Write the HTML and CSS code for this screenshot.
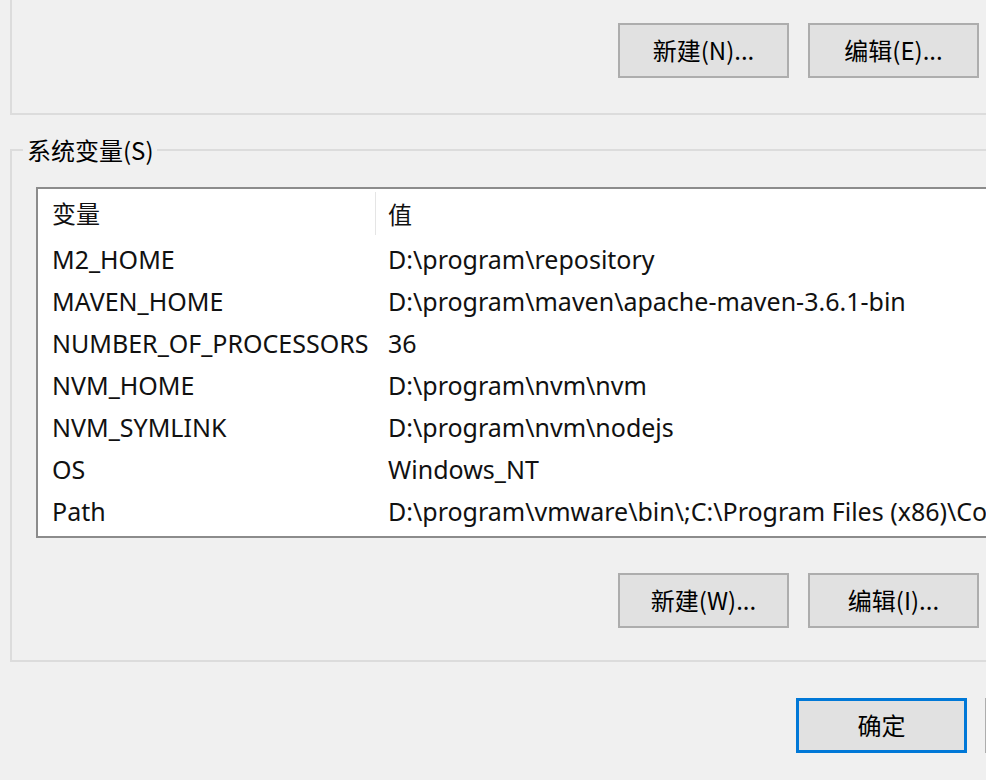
FILE: index.html
```html
<!DOCTYPE html>
<html lang="zh-CN">
<head>
<meta charset="utf-8">
<title>环境变量</title>
<link rel="stylesheet" href="styles.css">
</head>
<body>
<div class="page">
  <div class="group-top">
    <div class="btn-row">
      <button class="btn">新建(N)...</button>
      <button class="btn">编辑(E)...</button>
    </div>
  </div>

  <fieldset class="group-sys">
    <legend class="legend">系统变量(S)</legend>
    <div class="list">
      <div class="row head">
        <div class="c1">变量</div>
        <div class="c2">值</div>
      </div>
      <div class="row"><div class="c1">M2_HOME</div><div class="c2">D:\program\repository</div></div>
      <div class="row"><div class="c1">MAVEN_HOME</div><div class="c2">D:\program\maven\apache-maven-3.6.1-bin</div></div>
      <div class="row"><div class="c1">NUMBER_OF_PROCESSORS</div><div class="c2">36</div></div>
      <div class="row"><div class="c1">NVM_HOME</div><div class="c2">D:\program\nvm\nvm</div></div>
      <div class="row"><div class="c1">NVM_SYMLINK</div><div class="c2">D:\program\nvm\nodejs</div></div>
      <div class="row"><div class="c1">OS</div><div class="c2">Windows_NT</div></div>
      <div class="row"><div class="c1">Path</div><div class="c2">D:\program\vmware\bin\;C:\Program Files (x86)\Co</div></div>
    </div>
    <div class="btn-row lower">
      <button class="btn">新建(W)...</button>
      <button class="btn">编辑(I)...</button>
    </div>
  </fieldset>

  <div class="footer">
    <button class="btn primary">确定</button>
    <button class="btn" aria-label="取消"></button>
  </div>
</div>
</body>
</html>
```

FILE: styles.css
```css
html, body {
  margin: 0;
  padding: 0;
  background: #f0f0f0;
  overflow: hidden;
  width: 986px;
  height: 780px;
}

.page {
  width: 1200px;
  font-family: "Noto Sans", "Noto Sans CJK SC", sans-serif;
  color: #000;
}

.group-top {
  margin-left: 10px;
  width: 986px;
  padding-top: 23px;
  border-left: 2px solid #dcdcdc;
  border-bottom: 2px solid #dcdcdc;
  box-sizing: border-box;
  height: 115px;
}

.btn-row {
  display: flex;
  gap: 19px;
  padding-left: 606px;
}

.btn {
  width: 171px;
  height: 55px;
  box-sizing: border-box;
  border: 2px solid #adadad;
  background: #e1e1e1;
  font-family: "Noto Sans CJK SC", sans-serif;
  font-size: 24px;
  line-height: 1;
  color: #000;
  padding: 0 0 2px 0;
  margin: 0;
  flex: none;
}

.group-sys {
  margin: 20px 0 0 10px;
  width: 1100px;
  padding: 0;
  border: 2px solid #dcdcdc;
  box-sizing: border-box;
  min-inline-size: 0;
}

.legend {
  margin-left: 11px;
  padding: 0 3px 0 4px;
  font-family: "Noto Sans CJK SC", sans-serif;
  font-size: 24px;
  line-height: 30px;
  color: #000;
}

.list {
  margin: 22px 0 0 24px;
  height: 351px;
  box-sizing: border-box;
  border: 2px solid #8c8c8c;
  background: #fff;
  font-size: 25px;
  color: #111;
}

.row {
  display: flex;
  height: 42px;
  align-items: center;
  white-space: nowrap;
  padding-bottom: 4px;
  box-sizing: border-box;
}

.row.head {
  height: 51px;
  font-family: "Noto Sans CJK SC", sans-serif;
  font-size: 24px;
  padding-bottom: 5px;
}

.c1 {
  width: 323px;
  padding-left: 14px;
  flex: none;
}

.c2 {
  padding-left: 13px;
}

.head .c2 {
  border-left: 1px solid #e5e5e5;
  align-self: stretch;
  margin-top: 3px;
  display: flex;
  align-items: center;
  padding-left: 12px;
}

.lower {
  padding-left: 606px;
  margin-top: 35px;
  padding-bottom: 32px;
}

.footer {
  display: flex;
  gap: 18px;
  padding-left: 796px;
  margin-top: 36px;
}

.btn.primary {
  border: 3px solid #0078d7;
}
```
